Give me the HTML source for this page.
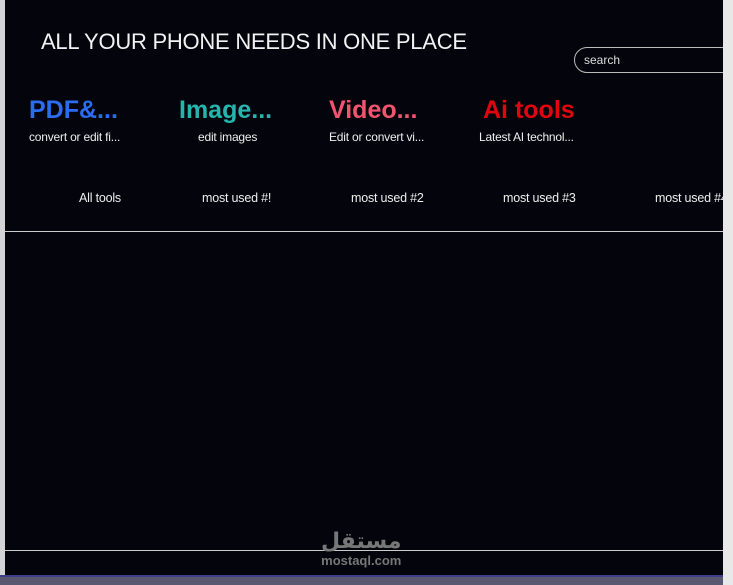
<!DOCTYPE html>
<html><head><meta charset="utf-8"><style>
*{margin:0;padding:0;box-sizing:border-box}
body{width:733px;height:585px;overflow:hidden;background:#e6e6e6;font-family:"Liberation Sans","DejaVu Sans",sans-serif;position:relative}
#left{position:absolute;left:0;top:0;width:5px;height:585px;background:#d4d4d4}
#main{position:absolute;left:5px;top:0;width:718px;height:575px;background:#04040c;color:#fff;overflow:hidden}
#right{position:absolute;left:723px;top:0;width:10px;height:585px;background:#e8e8e8}
#bottom{position:absolute;left:0;top:575px;width:723px;height:10px;background:#5a5870;border-top:2px solid #3d3f8a}
h1{position:absolute;left:36px;top:29px;font-weight:400;font-size:22px;color:#f2f2f2;letter-spacing:-.25px;white-space:nowrap}
.search{position:absolute;left:569px;top:47px;width:160px;height:26px;border:1px solid #bbb;border-radius:13px;font-size:12px;color:#ddd;padding:5px 0 0 9px}
.cat{position:absolute;top:96px;font-size:25px;font-weight:700;white-space:nowrap}
.sub{position:absolute;top:130px;font-size:12px;color:#eee;white-space:nowrap;letter-spacing:-.2px}
.nav{position:absolute;top:191px;font-size:12.5px;color:#eee;white-space:nowrap;letter-spacing:-.2px}
.line{position:absolute;left:0;width:718px;height:1px;background:#ccc}
.logo{position:absolute;left:316px;top:530px;color:#777;text-align:center}
</style></head><body>
<div id="left"></div>
<div id="main">
<h1>ALL YOUR PHONE NEEDS IN ONE PLACE</h1>
<div class="search">search</div>
<div class="cat" style="left:24px;color:#2b6cf0">PDF&amp;...</div>
<div class="cat" style="left:174px;color:#25b5ad">Image...</div>
<div class="cat" style="left:324px;color:#f0546e">Video...</div>
<div class="cat" style="left:478px;color:#e0060f">Ai tools</div>
<div class="sub" style="left:24px">convert or edit fi...</div>
<div class="sub" style="left:193px">edit images</div>
<div class="sub" style="left:324px">Edit or convert vi...</div>
<div class="sub" style="left:474px">Latest AI technol...</div>
<div class="nav" style="left:74px">All tools</div>
<div class="nav" style="left:197px">most used #!</div>
<div class="nav" style="left:346px">most used #2</div>
<div class="nav" style="left:498px">most used #3</div>
<div class="nav" style="left:650px">most used #4</div>
<div class="line" style="top:231px"></div>
<div class="line" style="top:550px"></div>
<div class="logo"><div style="font-family:'DejaVu Sans',sans-serif;font-size:22px;font-weight:700;line-height:24px">مستقل</div><div style="font-size:13px;font-weight:700;line-height:14px">mostaql.com</div></div>
</div>
<div id="right"></div>
<div id="bottom"></div>
</body></html>
